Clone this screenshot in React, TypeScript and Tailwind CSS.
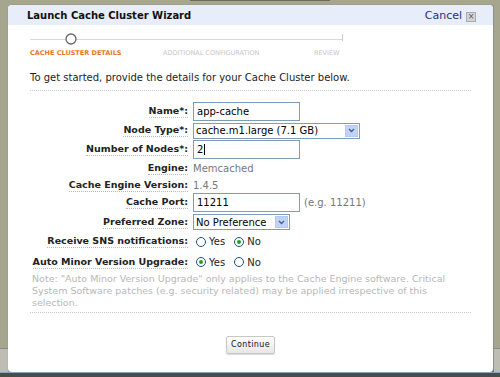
import type { ReactNode } from 'react'

const font = { fontFamily: '"DejaVu Sans", Verdana, sans-serif' }

function Label({ children }: { children: ReactNode }) {
  return (
    <span className="font-bold text-[9.5px] text-[#222] border-b border-dotted border-[#bbb] leading-[12px]">
      {children}
    </span>
  )
}

function Radio({ checked }: { checked?: boolean }) {
  return (
    <span className="w-[10px] h-[10px] rounded-full border border-[#1c5180] bg-white flex items-center justify-center">
      {checked && <span className="w-[4px] h-[4px] rounded-full bg-[#21a121]" />}
    </span>
  )
}

function SelectBox({ value, width }: { value: string; width: string }) {
  return (
    <div className={`${width} h-[16px] border border-[#7f9db9] bg-white flex items-center justify-between pl-[2px] pr-[1px]`}>
      <span className="text-[10px] text-black">{value}</span>
      <span className="w-[13px] h-[12px] bg-[#c1d3fb] border border-[#b6c9f5] flex items-center justify-center">
        <svg width="7" height="5" viewBox="0 0 7 5"><path d="M1 1 L3.5 3.5 L6 1" stroke="#4d6185" strokeWidth="1.4" fill="none" /></svg>
      </span>
    </div>
  )
}

function Input({ value, caret }: { value: string; caret?: boolean }) {
  return (
    <div className="w-[107px] h-[19px] border border-[#7f9db9] bg-white flex items-center pl-[3px] text-[10px] text-black">
      {value}
      {caret && <span className="w-px h-[11px] bg-black ml-px" />}
    </div>
  )
}

function Row({ label, children, h }: { label: string; children: ReactNode; h: string }) {
  return (
    <div className={`flex items-center ${h}`}>
      <div className="w-[183px] flex justify-end pr-[3px]">
        <Label>{label}</Label>
      </div>
      <div className="flex items-center pl-[2px]">{children}</div>
    </div>
  )
}

function Side({ w }: { w: string }) {
  return (
    <div className={`${w} flex flex-col`}>
      <div className="h-[343px] bg-[#a6a68f]" />
      <div className="flex-1 bg-[#bdbdb4] border-t border-[#8c8c84]" />
    </div>
  )
}

export default function App() {
  return (
    <div className="w-[500px] h-[377px] bg-[#a6a68f] flex flex-col overflow-hidden" style={font}>
      <div className="h-[5px] flex">
        <div className="ml-[190px] w-[140px] h-px bg-[#6b6b5c]" />
      </div>
      <div className="flex h-[367px]">
        <Side w="w-[8px]" />
        <div className="w-[486px] bg-white rounded-[4px] flex flex-col shadow-[1px_1px_2px_rgba(0,0,0,0.5)] border-r border-[#8b8f8c]">
          <div className="h-[20px] bg-[#e7eefa] rounded-t-[4px] flex items-center justify-between pl-[19px] pr-[17px]">
            <span className="font-bold text-[10px] text-[#111]">Launch Cache Cluster Wizard</span>
            <div className="flex items-center gap-[4px] mt-[3px]">
              <span className="text-[11px] text-[#26307a]">Cancel</span>
              <span className="w-[10px] h-[10px] bg-[#d4d4d4] border border-[#aaa] flex items-center justify-center text-[8px] leading-none text-[#555]">×</span>
            </div>
          </div>

          <div className="pl-[22px] pt-[8px]">
            <svg width="320" height="12" viewBox="0 0 320 12">
              <defs>
                <linearGradient id="og" x1="0" x2="1">
                  <stop offset="0" stopColor="#f4a35a" />
                  <stop offset="1" stopColor="#e9b88c" />
                </linearGradient>
              </defs>
              <line x1="0" y1="6.5" x2="312" y2="6.5" stroke="#d8d8d8" strokeWidth="1" />
              <line x1="312.5" y1="1" x2="312.5" y2="8" stroke="#c8c8c8" strokeWidth="1" />
              <line x1="0" y1="6.5" x2="36" y2="6.5" stroke="url(#og)" strokeWidth="1.2" />
              <circle cx="41" cy="6" r="5" fill="#fff" stroke="#666" strokeWidth="1.3" />
            </svg>
            <div className="flex text-[6.5px] leading-[10px] mt-[3px]">
              <span className="w-[133px] text-[#e8782a] font-semibold">CACHE CLUSTER DETAILS</span>
              <span className="w-[151px] text-[#c6c6c6]">ADDITIONAL CONFIGURATION</span>
              <span className="text-[#c6c6c6]">REVIEW</span>
            </div>
          </div>

          <div className="mx-[22px] mt-[6px] border-b border-dotted border-[#c8c8c8] pb-[2px]">
            <span className="text-[10px] text-[#222]">To get started, provide the details for your Cache Cluster below.</span>
          </div>

          <div className="flex flex-col mt-[10px] text-[10px]">
            <Row label="Name*:" h="h-[20px]"><Input value="app-cache" /></Row>
            <Row label="Node Type*:" h="h-[19px]"><SelectBox value="cache.m1.large (7.1 GB)" width="w-[167px]" /></Row>
            <Row label="Number of Nodes*:" h="h-[19px]"><Input value="2" caret /></Row>
            <Row label="Engine:" h="h-[18px]"><span className="text-[#777]">Memcached</span></Row>
            <Row label="Cache Engine Version:" h="h-[16px]"><span className="text-[#777]">1.4.5</span></Row>
            <Row label="Cache Port:" h="h-[19px]">
              <Input value="11211" />
              <span className="text-[#777] ml-[4px]">(e.g. 11211)</span>
            </Row>
            <Row label="Preferred Zone:" h="h-[20px]"><SelectBox value="No Preference" width="w-[97px]" /></Row>
            <Row label="Receive SNS notifications:" h="h-[19px]">
              <div className="flex items-center gap-[3px] pl-[3px]">
                <Radio /><span className="text-[#222]">Yes</span>
                <span className="w-[3px]" />
                <Radio checked /><span className="text-[#222]">No</span>
              </div>
            </Row>
            <Row label="Auto Minor Version Upgrade:" h="h-[22px]">
              <div className="flex items-center gap-[3px] pl-[3px]">
                <Radio checked /><span className="text-[#222]">Yes</span>
                <span className="w-[3px]" />
                <Radio /><span className="text-[#222]">No</span>
              </div>
            </Row>
          </div>

          <div className="mx-[22px] pl-[2px] pb-[3px] border-b border-dotted border-[#c8c8c8] text-[9.5px] leading-[12px] text-[#b8b8b8]">
            Note: "Auto Minor Version Upgrade" only applies to the Cache Engine software. Critical System Software patches (e.g. security related) may be applied irrespective of this selection.
          </div>

          <div className="flex justify-center mt-[23px]">
            <button className="h-[18px] px-[4px] border border-[#c7c7c7] rounded-[2px] bg-gradient-to-b from-white to-[#e6e6e6] text-[8px] tracking-[0.4px] text-[#111] shadow-[0_1px_1px_rgba(0,0,0,0.15)]">
              Continue
            </button>
          </div>
        </div>
        <Side w="flex-1" />
      </div>
      <div className="h-[5px] bg-[#4b4b4b] border-t border-[#8ea3b4]" />
    </div>
  )
}
